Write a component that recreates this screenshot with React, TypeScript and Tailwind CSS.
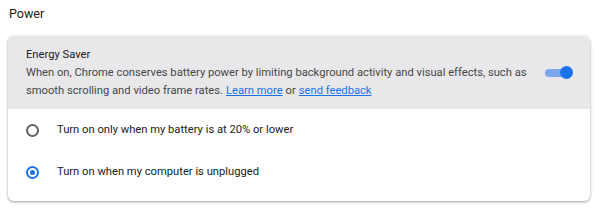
import { useState } from "react";

function Toggle({ on, setOn }: { on: boolean; setOn: (v: boolean) => void }) {
  return (
    <button
      onClick={() => setOn(!on)}
      className="relative w-[28px] h-[14px] shrink-0 cursor-pointer"
    >
      <span
        className={`absolute left-0 top-[3px] w-[24px] h-[8px] rounded-full ${
          on ? "bg-[#7ea6ee]" : "bg-[#bdc1c6]"
        }`}
      />
      <span
        className={`absolute top-[0px] w-[13px] h-[13px] rounded-full ${
          on ? "left-[15px] bg-[#1a73e8]" : "left-0 bg-white shadow"
        }`}
      />
    </button>
  );
}

function RadioRow({
  label,
  checked,
  onClick,
}: {
  label: string;
  checked: boolean;
  onClick: () => void;
}) {
  return (
    <div
      onClick={onClick}
      className="flex items-center h-[42px] pl-[18px] cursor-pointer"
    >
      <span
        className={`w-[13px] h-[13px] rounded-full border-2 flex items-center justify-center ${
          checked ? "border-[#1a73e8]" : "border-[#5f6368]"
        }`}
      >
        {checked && <span className="w-[5px] h-[5px] rounded-full bg-[#1a73e8]" />}
      </span>
      <span className="ml-[18px] text-[11.2px] text-[#202124]">{label}</span>
    </div>
  );
}

export default function App() {
  const [on, setOn] = useState(true);
  const [mode, setMode] = useState(1);

  return (
    <div
      className="w-[599px] h-[211px] bg-white pt-[4px]"
      style={{ fontFamily: "Roboto, 'Liberation Sans', sans-serif" }}
    >
      <div className="pl-[9px] text-[12.5px] text-[#202124] h-[32px] leading-[20px]">Power</div>
      <div className="mx-[8px] w-[582px] rounded-[6px] bg-white shadow-[0_1px_2px_rgba(60,64,67,0.3),0_1px_3px_1px_rgba(60,64,67,0.15)] overflow-hidden">
        <div className="bg-[#e8e8ea] flex items-center pl-[18px] pr-[17px] pt-[10px] pb-[9px]">
          <div className="flex-1 text-[11.2px] leading-[18px]">
            <div className="text-[#202124]">Energy Saver</div>
            <div className="text-[#474747]">
              When on, Chrome conserves battery power by limiting background activity and visual effects, such as
            </div>
            <div className="flex gap-[3px] text-[#474747]">
              <span>smooth scrolling and video frame rates.</span>
              <a href="#" className="text-[#1a73e8] underline">
                Learn more
              </a>
              <span>or</span>
              <a href="#" className="text-[#1a73e8] underline">
                send feedback
              </a>
            </div>
          </div>
          <Toggle on={on} setOn={setOn} />
        </div>
        <div className="pb-[8px]">
          <RadioRow
            label="Turn on only when my battery is at 20% or lower"
            checked={mode === 0}
            onClick={() => setMode(0)}
          />
          <RadioRow
            label="Turn on when my computer is unplugged"
            checked={mode === 1}
            onClick={() => setMode(1)}
          />
        </div>
      </div>
    </div>
  );
}
